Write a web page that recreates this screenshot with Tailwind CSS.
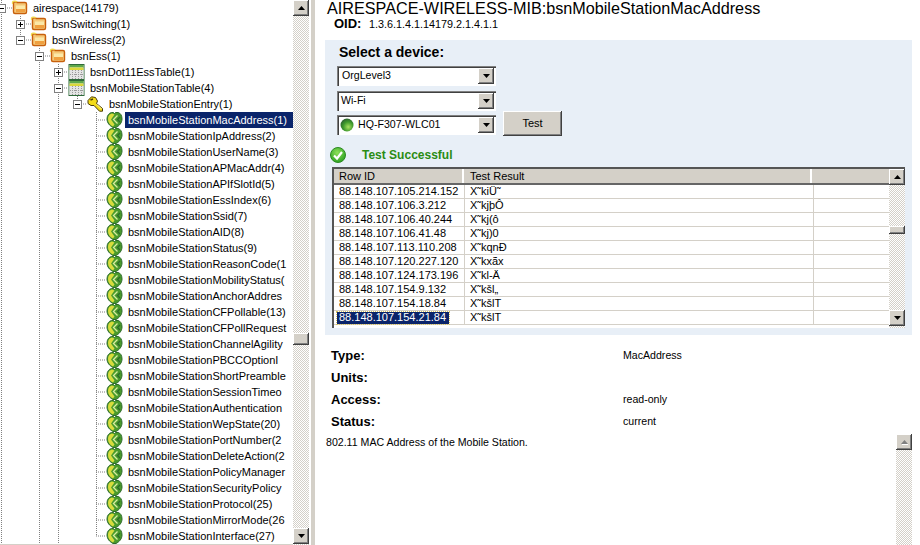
<!DOCTYPE html>
<html lang="en">
<head>
<meta charset="UTF-8" />
<title>MIB Browser</title>
<script src="https://cdn.jsdelivr.net/npm/@tailwindcss/browser@4"></script>
</head>
<body class="bg-white">
<div class="flex w-[920px] h-[545px] overflow-hidden bg-white text-black font-['Liberation_Sans',Arial,sans-serif]">

  <!-- tree -->
  <div class="flex w-[311px] shrink-0 h-full">
    <div class="relative w-[293px] h-full overflow-hidden">
      <svg class="absolute left-0 top-0" width="293" height="545" fill="none" stroke="#808080" stroke-dasharray="1 1">
        <path d="M1.5 0V545M20.5 16V40M39.5 48V545M58.5 64V545M77.5 96V104M96.5 112V536"/>
        <path d="M5 8H12M20 24H31M20 40H31M39 56H50M58 72H68M58 88H68M77 104H87"/>
        <path d="M96 120H106M96 136H106M96 152H106M96 168H106M96 184H106M96 200H106M96 216H106M96 232H106M96 248H106M96 264H106M96 280H106M96 296H106M96 312H106M96 328H106M96 344H106M96 360H106M96 376H106M96 392H106M96 408H106M96 424H106M96 440H106M96 456H106M96 472H106M96 488H106M96 504H106M96 520H106M96 536H106"/>
      </svg>
      <div id="tree" class="relative"></div>
      <div class="absolute left-0 bottom-0 w-full h-px bg-[#d4d0c8]"></div>
    </div>
    <div class="flex flex-col w-4 h-full bg-[conic-gradient(#d4d0c8_25%,#fff_0_50%,#d4d0c8_0_75%,#fff_0)] bg-size-[2px_2px]">
      <div class="flex items-center justify-center w-4 h-4 shrink-0 bg-[#d4d0c8] shadow-[inset_-1px_-1px_#404040,inset_1px_1px_#fff,inset_-2px_-2px_#808080]">
        <svg width="7" height="4"><path d="M3.5 0L7 4H0Z" fill="#000"/></svg>
      </div>
      <div class="h-[317px] shrink-0"></div>
      <div class="w-4 h-3 shrink-0 bg-[#d4d0c8] shadow-[inset_-1px_-1px_#404040,inset_1px_1px_#fff,inset_-2px_-2px_#808080]"></div>
      <div class="flex-1"></div>
      <div class="flex items-center justify-center w-4 h-4 shrink-0 mb-px bg-[#d4d0c8] shadow-[inset_-1px_-1px_#404040,inset_1px_1px_#fff,inset_-2px_-2px_#808080]">
        <svg width="7" height="4"><path d="M0 0H7L3.5 4Z" fill="#000"/></svg>
      </div>
    </div>
  </div>

  <!-- splitter -->
  <div class="w-1 shrink-0 h-full bg-[#d4d0c8]"></div>

  <!-- details -->
  <div class="flex flex-col flex-1 min-w-0 pr-2">
    <h1 class="h-4 pl-3 text-[16.2px] leading-4 whitespace-nowrap">AIRESPACE-WIRELESS-MIB:bsnMobileStationMacAddress</h1>
    <div class="flex items-center h-4 pl-[19px] text-[10.8px]">
      <span class="text-[13px] font-bold w-[35px]">OID:</span><span>1.3.6.1.4.1.14179.2.1.4.1.1</span>
    </div>
    <div class="h-[295px] ml-[10px] mt-2 bg-[#e8eff7] shrink-0">
      <div class="pl-[14px] pt-[3px] h-[26px] text-[14px] font-bold leading-[18px]">Select a device:</div>
      <div class="flex pl-3">
        <div class="flex flex-col w-[159px]">
          <div class="flex items-center justify-between h-5 pl-[5px] pr-[2px] bg-white text-[10.6px] shadow-[inset_1px_1px_#808080,inset_2px_2px_#404040,inset_-1px_-1px_#fff]">
            <span>OrgLevel3</span>
            <span class="flex items-center justify-center w-4 h-4 bg-[#d4d0c8] shadow-[inset_-1px_-1px_#404040,inset_1px_1px_#fff,inset_-2px_-2px_#808080]"><svg width="7" height="4"><path d="M0 0H7L3.5 4Z" fill="#000"/></svg></span>
          </div>
          <div class="flex items-center justify-between h-5 mt-[5px] pl-[4px] pr-[2px] bg-white text-[10.6px] shadow-[inset_1px_1px_#808080,inset_2px_2px_#404040,inset_-1px_-1px_#fff]">
            <span>Wi-Fi</span>
            <span class="flex items-center justify-center w-4 h-4 bg-[#d4d0c8] shadow-[inset_-1px_-1px_#404040,inset_1px_1px_#fff,inset_-2px_-2px_#808080]"><svg width="7" height="4"><path d="M0 0H7L3.5 4Z" fill="#000"/></svg></span>
          </div>
          <div class="flex items-center h-5 mt-[4px] pl-[3px] pr-[2px] bg-white text-[10.6px] shadow-[inset_1px_1px_#808080,inset_2px_2px_#404040,inset_-1px_-1px_#fff]">
            <svg width="14" height="14" viewBox="0 0 14 14"><defs><radialGradient id="orb" cx="0.6" cy="0.65" r="0.7"><stop offset="0" stop-color="#a8e060"/><stop offset="0.55" stop-color="#3f9a2c"/><stop offset="1" stop-color="#2a5a30"/></radialGradient></defs><circle cx="7" cy="7" r="6.5" fill="url(#orb)"/></svg>
            <span class="ml-[4px] flex-1">HQ-F307-WLC01</span>
            <span class="flex items-center justify-center w-4 h-4 bg-[#d4d0c8] shadow-[inset_-1px_-1px_#404040,inset_1px_1px_#fff,inset_-2px_-2px_#808080]"><svg width="7" height="4"><path d="M0 0H7L3.5 4Z" fill="#000"/></svg></span>
          </div>
        </div>
        <button class="self-end w-[59px] h-[25px] ml-[7px] -mb-px text-[11px] bg-[#d4d0c8] shadow-[inset_-1px_-1px_#404040,inset_1px_1px_#fff,inset_-2px_-2px_#808080]">Test</button>
      </div>
      <div class="flex items-center h-4 mt-3 pl-[5px]">
        <svg width="16" height="16" viewBox="0 0 16 16"><defs><radialGradient id="ok" cx="0.45" cy="0.35" r="0.75"><stop offset="0" stop-color="#8fe05a"/><stop offset="1" stop-color="#1f9a1a"/></radialGradient></defs><circle cx="8" cy="8" r="7.5" fill="url(#ok)" stroke="#2c8a22"/><path d="M4 8.5L7 11.5L12 5" fill="none" stroke="#fff" stroke-width="2.2"/></svg>
        <span class="ml-4 text-[12px] font-bold text-[#2a8c14]">Test Successful</span>
      </div>
      <div class="relative flex flex-col w-[573px] h-[161px] ml-[7px] mt-1 bg-white border-t-2 border-l-2 border-[#555] overflow-hidden">
        <div class="flex h-4 shrink-0 text-[11px] bg-[#d4d0c8] border-b-2 border-[#666]">
          <div class="flex items-center w-[130px] pl-[5px] border-r-2 border-white">Row ID</div>
          <div class="flex items-center w-[348px] pl-[6px] border-r-2 border-white">Test Result</div>
          <div class="flex-1"></div>
        </div>
        <div id="rows" class="pr-4 text-[11px]"></div>
        <div class="absolute right-0 top-0 flex flex-col w-4 h-full bg-[conic-gradient(#d4d0c8_25%,#fff_0_50%,#d4d0c8_0_75%,#fff_0)] bg-size-[2px_2px]">
          <div class="flex items-center justify-center w-4 h-4 shrink-0 bg-[#d4d0c8] shadow-[inset_-1px_-1px_#404040,inset_1px_1px_#fff,inset_-2px_-2px_#808080]"><svg width="7" height="4"><path d="M3.5 0L7 4H0Z" fill="#000"/></svg></div>
          <div class="h-[41px] shrink-0"></div>
          <div class="w-4 h-2 shrink-0 bg-[#d4d0c8] shadow-[inset_-1px_-1px_#404040,inset_1px_1px_#fff,inset_-2px_-2px_#808080]"></div>
          <div class="flex-1"></div>
          <div class="flex items-center justify-center w-4 h-4 shrink-0 mb-[2px] bg-[#d4d0c8] shadow-[inset_-1px_-1px_#404040,inset_1px_1px_#fff,inset_-2px_-2px_#808080]"><svg width="7" height="4"><path d="M0 0H7L3.5 4Z" fill="#000"/></svg></div>
        </div>
      </div>
    </div>
    <div class="grid grid-cols-[292px_1fr] auto-rows-[22px] items-center mt-[10px] pl-4 text-[10.6px]">
      <span class="text-[13px] font-bold">Type:</span><span>MacAddress</span>
      <span class="text-[13px] font-bold">Units:</span><span></span>
      <span class="text-[13px] font-bold">Access:</span><span>read-only</span>
      <span class="text-[13px] font-bold">Status:</span><span>current</span>
    </div>
    <div class="flex flex-1 min-h-0 mt-px">
      <p class="flex-1 pl-[11px] pt-px text-[10.6px] leading-[14px]">802.11 MAC Address of the Mobile Station.</p>
      <div class="w-4 bg-[conic-gradient(#d4d0c8_25%,#fff_0_50%,#d4d0c8_0_75%,#fff_0)] bg-size-[2px_2px]">
        <div class="flex items-center justify-center w-4 h-4 bg-[#d4d0c8] shadow-[inset_-1px_-1px_#404040,inset_1px_1px_#fff,inset_-2px_-2px_#808080]"><svg width="7" height="5"><path d="M3.5 0L7 4H0Z" fill="#808080"/><path d="M1 4.5H7" stroke="#fff"/></svg></div>
      </div>
    </div>
  </div>
</div>

<script>
  const folder = `<svg width="17" height="16" viewBox="0 0 17 16"><path d="M2.5 3.5C2.5 1.5 5 1.5 6 2.5H14C15 2.5 15.5 3 15.5 4V12C15.5 13 15 13.5 14 13.5H4C3 13.5 2.5 13 2.5 12Z" fill="#f5c878" stroke="#c8600c" stroke-width="1.4"/><path d="M5 5.5H14V9H5Z" fill="#fbe8a8"/><path d="M5 9H14V12H5Z" fill="#f0a040"/><path d="M1.5 4V2C2 .8 5 .8 6 2" fill="none" stroke="#f2d84a" stroke-width="1.2"/></svg>`;
  const table = `<svg width="17" height="16" viewBox="0 0 17 16"><rect x="1" y="0.5" width="15" height="15" fill="#fff" stroke="#2f6b3a"/><rect x="1.5" y="1" width="14" height="2.5" fill="#5fa84a"/><rect x="1.5" y="3.5" width="14" height="2.5" fill="#dcd83a"/><rect x="1.5" y="6" width="14" height="9" fill="#e4e4e4"/><path d="M4.5 6V15M7.5 6V15M10.5 6V15M13.5 6V15M2 10.5H15" stroke="#9a9a9a" stroke-dasharray="1 1"/></svg>`;
  const key = `<svg width="17" height="16" viewBox="0 0 17 16"><path d="M1 4.5L4.5 .8L8.5 1.5L10.5 5L9.5 7.5L15.5 12.5V15.2H12.5L7 9.5L4 9.5L1 7.5Z" fill="#f4dc18" stroke="#4a3c08"/><path d="M3.5 4L6 3" stroke="#4a3c08" stroke-width="1.5"/><path d="M10 8.5L14.5 13" stroke="#fff6a0"/></svg>`;
  const leaf = `<svg width="17" height="16" viewBox="0 0 17 16"><path d="M1 7C1 3.5 3 1 5.5 .5H7.5L8.5 1.5L9.5 .5H12C14.5 1 16 3.5 16 7C16 11 13 14 10 15.5H7C4 14 1 11 1 7Z" fill="#4a9a2c" stroke="#2d6a2a"/><path d="M2 7C2 4 3.5 2 6 1.5L8.5 2.5L5 7.5L8.5 12.5L7 14.5C4 13 2 10.5 2 7Z" fill="#d8dc3c"/><path d="M11.5 3.5L7.5 7.5L11.5 11.5" fill="none" stroke="#d8ecA0" stroke-width="1.3"/><path d="M14 5L11.5 7.5L14 10" fill="none" stroke="#2d6a2a" stroke-width="1.2"/></svg>`;

  const box = (sign, depth) => `<span class="flex items-center justify-center shrink-0 w-[9px] h-[9px] mr-[5px] bg-white border border-[#808080]" style="margin-left:${19 * depth - 3}px"><svg width="7" height="7"><path d="${sign === "+" ? "M1 3.5H6M3.5 1V6" : "M1 3.5H6"}" stroke="#000"/></svg></span>`;

  const nodes = [
    [0, "-", folder, "airespace(14179)"],
    [1, "+", folder, "bsnSwitching(1)"],
    [1, "-", folder, "bsnWireless(2)"],
    [2, "-", folder, "bsnEss(1)"],
    [3, "+", table, "bsnDot11EssTable(1)"],
    [3, "-", table, "bsnMobileStationTable(4)"],
    [4, "-", key, "bsnMobileStationEntry(1)"],
    ...[
      "bsnMobileStationMacAddress(1)", "bsnMobileStationIpAddress(2)", "bsnMobileStationUserName(3)",
      "bsnMobileStationAPMacAddr(4)", "bsnMobileStationAPIfSlotId(5)", "bsnMobileStationEssIndex(6)",
      "bsnMobileStationSsid(7)", "bsnMobileStationAID(8)", "bsnMobileStationStatus(9)",
      "bsnMobileStationReasonCode(1", "bsnMobileStationMobilityStatus(", "bsnMobileStationAnchorAddres",
      "bsnMobileStationCFPollable(13)", "bsnMobileStationCFPollRequest", "bsnMobileStationChannelAgility",
      "bsnMobileStationPBCCOptionI", "bsnMobileStationShortPreamble", "bsnMobileStationSessionTimeo",
      "bsnMobileStationAuthentication", "bsnMobileStationWepState(20)", "bsnMobileStationPortNumber(2",
      "bsnMobileStationDeleteAction(2", "bsnMobileStationPolicyManager", "bsnMobileStationSecurityPolicy",
      "bsnMobileStationProtocol(25)", "bsnMobileStationMirrorMode(26", "bsnMobileStationInterface(27)",
    ].map((name) => [5, "", leaf, name]),
  ];

  document.getElementById("tree").innerHTML = nodes.map(([depth, sign, icon, name], i) => {
    const start = sign ? box(sign, depth) : `<span class="shrink-0" style="width:${19 * depth + 11}px"></span>`;
    const label = i === 7 ? "bg-[#0a246a] text-white flex-1" : "";
    return `<div class="flex items-center h-4 text-[11px] whitespace-nowrap">${start}<span class="flex shrink-0 w-[17px] h-4 mr-[2px]">${icon}</span><span class="h-4 px-[3px] leading-4 ${label}">${name}</span></div>`;
  }).join("");

  const results = [
    ["88.148.107.105.214.152", "X˜kiÜ˜"],
    ["88.148.107.106.3.212", "X˜kjþÔ"],
    ["88.148.107.106.40.244", "X˜kj(ô"],
    ["88.148.107.106.41.48", "X˜kj)0"],
    ["88.148.107.113.110.208", "X˜kqnÐ"],
    ["88.148.107.120.227.120", "X˜kxãx"],
    ["88.148.107.124.173.196", "X˜kl-Ä"],
    ["88.148.107.154.9.132", "X˜kšl„"],
    ["88.148.107.154.18.84", "X˜kšlT"],
    ["88.148.107.154.21.84", "X˜kšlT"],
  ];

  document.getElementById("rows").innerHTML = results.map(([id, value], i) => {
    const cell = i === 9
      ? `<span class="flex items-center h-[12px] -ml-[2px] pl-[2px] pr-[3px] bg-[#0a246a] text-white outline-1 outline-dotted outline-[#d4c060]">${id}</span>`
      : `<span>${id}</span>`;
    return `<div class="flex h-[14px] border-b border-[#d4d0c8]"><div class="flex items-center w-[131px] pl-[5px] border-r border-[#d4d0c8]">${cell}</div><div class="flex items-center w-[349px] pl-[5px] border-r border-[#d4d0c8]">${value}</div></div>`;
  }).join("");
</script>
</body>
</html>
